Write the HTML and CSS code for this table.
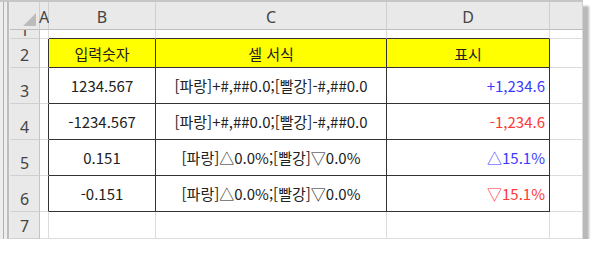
FILE: index.html
```html
<!DOCTYPE html>
<html lang="ko">
<head>
<meta charset="utf-8">
<link rel="stylesheet" href="styles.css">
</head>
<body>
<div class="frame">
  <div class="chrome"><div class="line1"></div><div class="line2"></div></div>
  <div class="sheet">
    <div class="ch corner"><span class="tri"></span></div>
    <div class="ch cola">A</div>
    <div class="ch">B</div>
    <div class="ch">C</div>
    <div class="ch">D</div>
    <div class="ch"></div>

    <div class="rh r1"><span>1</span></div>
    <div class="c"></div>
    <div class="c topb"></div>
    <div class="c topb"></div>
    <div class="c topb"></div>
    <div class="c"></div>

    <div class="rh">2</div>
    <div class="c leftb"></div>
    <div class="t hd">입력숫자</div>
    <div class="t hd">셀 서식</div>
    <div class="t hd">표시</div>
    <div class="c"></div>

    <div class="rh">3</div>
    <div class="c leftb"></div>
    <div class="t">1234.567</div>
    <div class="t">[파랑]+#,##0.0;[빨강]-#,##0.0</div>
    <div class="t rt blue">+1,234.6</div>
    <div class="c"></div>

    <div class="rh">4</div>
    <div class="c leftb"></div>
    <div class="t">-1234.567</div>
    <div class="t">[파랑]+#,##0.0;[빨강]-#,##0.0</div>
    <div class="t rt red">-1,234.6</div>
    <div class="c"></div>

    <div class="rh">5</div>
    <div class="c leftb"></div>
    <div class="t">0.151</div>
    <div class="t">[파랑]△0.0%;[빨강]▽0.0%</div>
    <div class="t rt blue">△15.1%</div>
    <div class="c"></div>

    <div class="rh">6</div>
    <div class="c leftb"></div>
    <div class="t">-0.151</div>
    <div class="t">[파랑]△0.0%;[빨강]▽0.0%</div>
    <div class="t rt red">▽15.1%</div>
    <div class="c"></div>

    <div class="rh">7</div>
    <div class="c"></div>
    <div class="c"></div>
    <div class="c"></div>
    <div class="c"></div>
    <div class="c"></div>
  </div>
</div>
</body>
</html>
```
FILE: styles.css
```css
* { box-sizing: border-box; }
body {
  margin: 0;
  background: #ffffff;
  font-family: "Noto Sans CJK KR", "Noto Sans", sans-serif;
}
.frame {
  width: 583px;
  height: 239px;
  display: flex;
  background: #ffffff;
  box-shadow: 6px 6px 2px #b9b9b9;
}
.chrome {
  width: 10px;
  background: #eeeeee;
  border-top: 2px solid #c6c6c6;
  position: relative;
}
.line1 {
  position: absolute;
  left: 3px;
  top: 0;
  bottom: 0;
  width: 1px;
  background: #b0b0b0;
}
.line2 {
  position: absolute;
  left: 7px;
  top: 0;
  bottom: 0;
  width: 2px;
  background: #bdbdbd;
}
.sheet {
  width: 573px;
  border-top: 2px solid #c6c6c6;
  display: grid;
  grid-template-columns: 30px 9px 107px 231px 163px 33px;
  grid-template-rows: 28px 9px 29px 36px 36px 36px 36px 27px;
}
.sheet > div {
  border-right: 1px solid #dcdcdc;
  border-bottom: 1px solid #dcdcdc;
  display: flex;
  align-items: center;
  justify-content: center;
  font-size: 15px;
  color: #222;
  white-space: nowrap;
  min-width: 0;
}
.sheet > .ch {
  background: #e9e9e9;
  border-right: 1px solid #cfcfcf;
  border-bottom: 1px solid #bdbdbd;
  color: #444;
  font-family: "Noto Sans", sans-serif;
  font-size: 16px;
  align-items: flex-end;
  padding-bottom: 1px;
}
.sheet > .corner {
  justify-content: flex-end;
  padding: 0 3px 3px 0;
}
.tri {
  width: 0;
  height: 0;
  border-left: 13px solid transparent;
  border-bottom: 13px solid #bcbcbc;
}
.sheet > .cola { overflow: visible; }
.sheet > .rh {
  background: #e9e9e9;
  border-right: 1px solid #c4c4c4;
  border-bottom: 1px solid #d0d0d0;
  color: #444;
  font-family: "Noto Sans", sans-serif;
  font-size: 16px;
  align-items: flex-end;
  padding-bottom: 1px;
}
.sheet > .r1 {
  overflow: hidden;
  padding-bottom: 0;
  line-height: 14px;
}
.r1 span { margin-bottom: 1px; }
.sheet > .topb { border-bottom: 1px solid #333; }
.sheet > .leftb { border-right: 1px solid #333; }
.sheet > .t {
  border-right: 1px solid #333;
  border-bottom: 1px solid #333;
}
.sheet > .hd { background: #ffff00; }
.sheet > .rt {
  justify-content: flex-end;
  padding-right: 4px;
}
.sheet > .blue { color: #3b3bff; }
.sheet > .red { color: #ff3838; }
```
